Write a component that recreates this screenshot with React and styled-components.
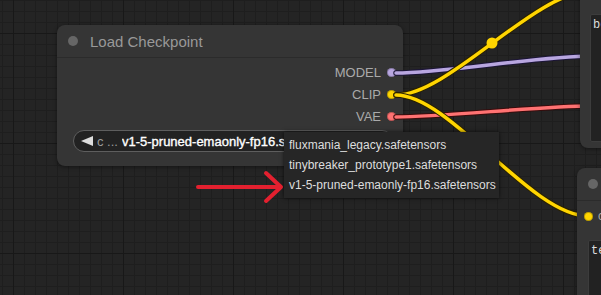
import styled, { createGlobalStyle } from "styled-components";

const GlobalStyle = createGlobalStyle`
  html, body {
    margin: 0;
    padding: 0;
    background: #232323;
    overflow: hidden;
  }
  * {
    box-sizing: border-box;
  }
`;

const Canvas = styled.div`
  position: relative;
  width: 601px;
  height: 295px;
  overflow: hidden;
  font-family: "Liberation Sans", Arial, sans-serif;
  background-color: #242424;
  background-image: linear-gradient(#181818 1px, transparent 1px),
    linear-gradient(90deg, #181818 1px, transparent 1px),
    linear-gradient(#1e1e1e 1px, transparent 1px),
    linear-gradient(90deg, #1e1e1e 1px, transparent 1px);
  background-size: 110px 110px, 110px 110px, 11px 11px, 11px 11px;
  background-position: 13px 33px, 13px 33px, 2px 0px, 2px 0px;
`;

const Node = styled.div`
  position: absolute;
  left: ${(p) => p.$x}px;
  top: ${(p) => p.$y}px;
  width: ${(p) => p.$w}px;
  height: ${(p) => p.$h}px;
  z-index: ${(p) => p.$z || 1};
  display: flex;
  flex-direction: column;
  background: #353535;
  border-radius: 8px;
  box-shadow: 0 1px 4px rgba(0, 0, 0, 0.45);
`;

const Title = styled.div`
  height: 33px;
  flex: none;
  display: flex;
  align-items: center;
  gap: 12px;
  padding-left: 11px;
  border-bottom: 1px solid #2b2b2b;
  color: #999;
  font-size: 15px;
  white-space: nowrap;
`;

const TitleDot = styled.span`
  width: 10px;
  height: 10px;
  border-radius: 50%;
  background: #666;
  flex: none;
`;

const Outputs = styled.div`
  display: flex;
  flex-direction: column;
  align-items: flex-end;
  padding: 3px 7px 0 0;
`;

const Slot = styled.div`
  height: 22px;
  display: flex;
  align-items: center;
  gap: 6px;
  color: #aaa;
  font-size: 13px;
`;

const SlotDot = styled.span`
  width: 9px;
  height: 9px;
  border-radius: 50%;
  background: ${(p) => p.$color};
  box-shadow: inset 0 0 0 1px rgba(0, 0, 0, 0.25);
  flex: none;
`;

const Combo = styled.div`
  margin: 3px 10px 0 16px;
  height: 22px;
  display: flex;
  align-items: center;
  padding: 0 7px;
  gap: 4px;
  background: #222;
  border: 1px solid #5e5e5e;
  border-radius: 11px;
  font-size: 13px;
  white-space: nowrap;
  overflow: hidden;
`;

const Arrow = styled.span`
  width: 0;
  height: 0;
  flex: none;
  border-top: 5px solid transparent;
  border-bottom: 5px solid transparent;
  ${(p) =>
    p.$right
      ? "border-left: 10px solid #ddd; margin-left: auto;"
      : "border-right: 12px solid #ddd;"}
`;

const ComboLabel = styled.span`
  color: #999;
  margin-right: 0;
`;

const ComboValue = styled.span`
  color: #fff;
  -webkit-text-stroke: 0.35px #fff;
  overflow: hidden;
  text-overflow: clip;
`;

const TextArea = styled.div`
  margin: ${(p) => p.$margin};
  flex: 1;
  background: #222;
  border: 1px solid #3c3c3c;
  border-radius: 2px;
  padding: 3px 2px;
  color: #ddd;
  font-family: "Liberation Mono", "DejaVu Sans Mono", monospace;
  font-size: 12px;
  white-space: nowrap;
  overflow: hidden;
`;

const InputRow = styled.div`
  height: 22px;
  margin-top: 4px;
  display: flex;
  align-items: center;
  gap: 5px;
  padding-left: 7px;
  color: #aaa;
  font-size: 12px;
  white-space: nowrap;
`;

const Wires = styled.svg`
  position: absolute;
  left: 0;
  top: 0;
  z-index: ${(p) => p.$z};
  pointer-events: none;
`;

const Menu = styled.div`
  position: absolute;
  left: 284px;
  top: 132px;
  width: 215px;
  z-index: 5;
  padding: 3px 0 3px;
  background: #262626;
  box-shadow: 0 0 4px rgba(0, 0, 0, 0.7);
`;

const MenuItem = styled.div`
  height: 20px;
  line-height: 20px;
  padding-left: 5px;
  color: #ddd;
  font-size: 12px;
  white-space: nowrap;
`;

const wires = [
  { d: "M396 73 C 443 73, 541 56, 591 56", color: "#b8a6e0", edge: "#1c1538" },
  { d: "M396 117 C 443 117, 541 106, 591 106", color: "#ff7272", edge: "#3a0c0c" },
  { d: "M396 95 C 449 95, 535 -9, 591 -9", color: "#ffd500", edge: "#2a2100" },
  { d: "M396 95 C 450 95, 531 216, 588 216", color: "#ffd500", edge: "#2a2100" },
];

const files = [
  "fluxmania_legacy.safetensors",
  "tinybreaker_prototype1.safetensors",
  "v1-5-pruned-emaonly-fp16.safetensors",
];

export default function App() {
  return (
    <Canvas>
      <GlobalStyle />
      <Node $x={57} $y={25} $w={346} $h={141}>
        <Title>
          <TitleDot />
          Load Checkpoint
        </Title>
        <Outputs>
          <Slot>
            MODEL <SlotDot $color="#b8a6e0" />
          </Slot>
          <Slot>
            CLIP <SlotDot $color="#ffd500" />
          </Slot>
          <Slot>
            VAE <SlotDot $color="#ff7272" />
          </Slot>
        </Outputs>
        <Combo>
          <Arrow />
          <ComboLabel>c ...</ComboLabel>
          <ComboValue>v1-5-pruned-emaonly-fp16.safetensors</ComboValue>
          <Arrow $right />
        </Combo>
      </Node>

      <Wires $z={2} width="601" height="295" viewBox="0 0 601 295">
        {wires.map((w, i) => (
          <g key={i} fill="none" strokeLinecap="round">
            <path d={w.d} stroke={w.edge} strokeWidth="5.5" />
            <path d={w.d} stroke={w.color} strokeWidth="3.5" />
          </g>
        ))}
        <circle cx="492" cy="43" r="5.5" fill="#ffd500" />
      </Wires>

      <Node $x={580} $y={-20} $w={40} $h={168} $z={3}>
        <TextArea $margin="34px 0 6px 10px">be</TextArea>
      </Node>

      <Node $x={577} $y={168} $w={40} $h={150} $z={3}>
        <Title>
          <TitleDot />
        </Title>
        <InputRow>
          <SlotDot $color="#ffd500" />
          clip
        </InputRow>
        <TextArea $margin="13px 0 0 11px">te</TextArea>
      </Node>

      <Menu>
        {files.map((f) => (
          <MenuItem key={f}>{f}</MenuItem>
        ))}
      </Menu>

      <Wires $z={6} width="601" height="295" viewBox="0 0 601 295">
        <g
          fill="none"
          stroke="#e3202f"
          strokeWidth="4"
          strokeLinecap="round"
          strokeLinejoin="round"
        >
          <path d="M198 187 H 279" />
          <path d="M266 173 L 281 187 L 266 201" />
        </g>
      </Wires>
    </Canvas>
  );
}
